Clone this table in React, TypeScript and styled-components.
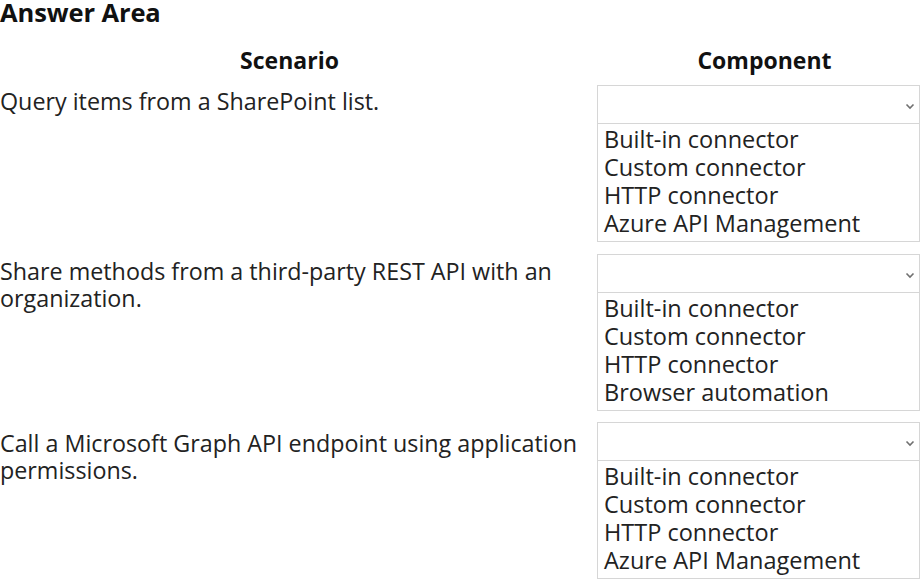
import React from "react";
import styled, { createGlobalStyle } from "styled-components";

const Global = createGlobalStyle`
  html, body { margin: 0; padding: 0; background: #ffffff; }
  body { font-family: "Open Sans", "Noto Sans", sans-serif; color: #1f1f1f; }
`;

const Page = styled.div`
  width: 924px;
  height: 582px;
  box-sizing: border-box;
  overflow: hidden;
`;

const Title = styled.h1`
  margin: 0;
  height: 26px;
  font-size: 25.5px;
  line-height: 25px;
  font-weight: 700;
  color: #111;
  letter-spacing: -0.1px;
`;

const Grid = styled.div`
  display: grid;
  grid-template-columns: 597px 323px;
  margin-top: 20px;
`;

const Heading = styled.div<{ $shift: number }>`
  font-size: 23px;
  font-weight: 700;
  line-height: 28px;
  text-align: center;
  color: #111;
  height: 39px;
  white-space: nowrap;
  padding-left: ${(p) => (p.$shift > 0 ? p.$shift * 2 : 0)}px;
  padding-right: ${(p) => (p.$shift < 0 ? -p.$shift * 2 : 0)}px;
`;

const Scenario = styled.div<{ $gap: number; $top: number }>`
  font-size: 23.3px;
  line-height: 27px;
  padding-top: ${(p) => p.$top}px;
  padding-right: 6px;
  margin-bottom: ${(p) => p.$gap}px;
  color: #222;
`;

const Dropdown = styled.div<{ $gap: number }>`
  display: flex;
  flex-direction: column;
  margin-bottom: ${(p) => p.$gap}px;
`;

const Select = styled.div`
  height: 39px;
  box-sizing: border-box;
  border: 1px solid #d6d6d6;
  display: flex;
  align-items: center;
  justify-content: flex-end;
  padding: 3px 4px 0 0;
`;

const Options = styled.ul`
  list-style: none;
  margin: 0;
  padding: 1px 0 4px 6px;
  box-sizing: border-box;
  height: 118px;
  border: 1px solid #d6d6d6;
  border-top: none;
`;

const Option = styled.li`
  font-size: 23.5px;
  line-height: 28px;
  color: #222;
  white-space: nowrap;
`;

const Chevron = () => (
  <svg width="10" height="7" viewBox="0 0 10 7">
    <path d="M1.5 1.5 L5 5 L8.5 1.5" fill="none" stroke="#707070" strokeWidth="1.6" />
  </svg>
);

const rows = [
  {
    text: "Query items from a SharePoint list.",
    options: ["Built-in connector", "Custom connector", "HTTP connector", "Azure API Management"],
    gap: 12,
    top: 3,
  },
  {
    text: "Share methods from a third-party REST API with an organization.",
    options: ["Built-in connector", "Custom connector", "HTTP connector", "Browser automation"],
    gap: 11,
    top: 4,
  },
  {
    text: "Call a Microsoft Graph API endpoint using application permissions.",
    options: ["Built-in connector", "Custom connector", "HTTP connector", "Azure API Management"],
    gap: 0,
    top: 8,
  },
];

export default function App() {
  return (
    <Page>
      <Global />
      <Title>Answer Area</Title>
      <Grid>
        <Heading $shift={-9}>Scenario</Heading>
        <Heading $shift={6}>Component</Heading>
        {rows.map((r, i) => (
          <React.Fragment key={i}>
            <Scenario $gap={r.gap} $top={r.top}>
              {r.text}
            </Scenario>
            <Dropdown $gap={r.gap}>
              <Select>
                <Chevron />
              </Select>
              <Options>
                {r.options.map((o) => (
                  <Option key={o}>{o}</Option>
                ))}
              </Options>
            </Dropdown>
          </React.Fragment>
        ))}
      </Grid>
    </Page>
  );
}
